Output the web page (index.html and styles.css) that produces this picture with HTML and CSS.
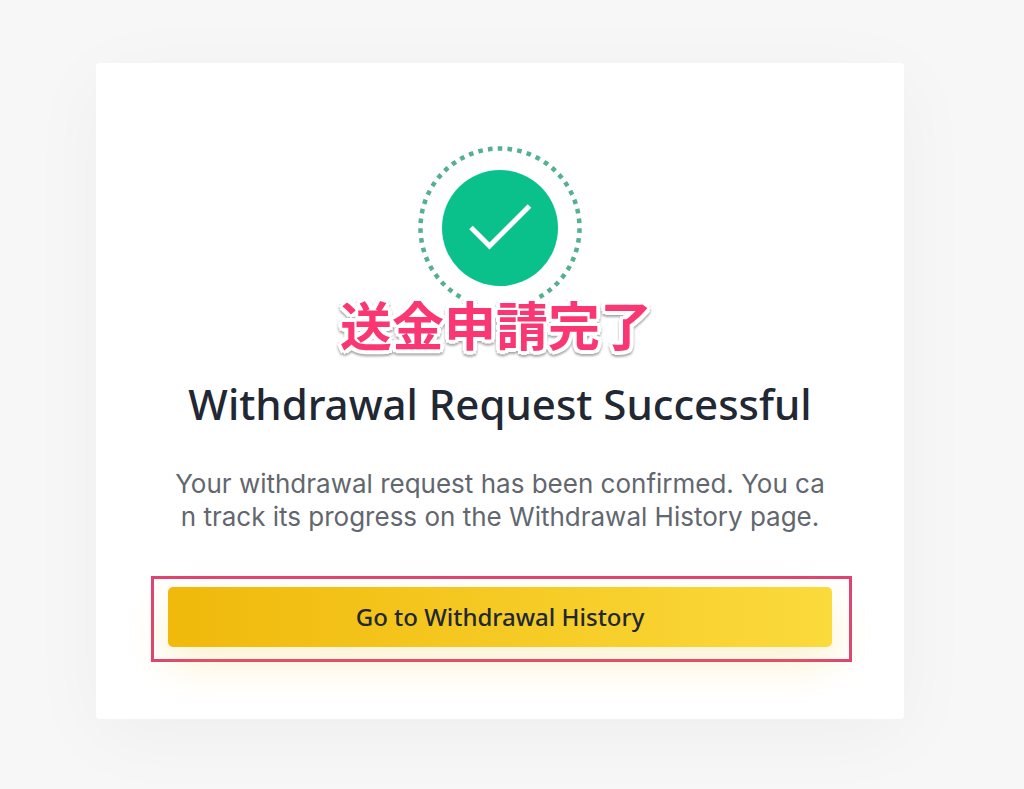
FILE: index.html
```html
<!doctype html>
<html lang="en">

<head>
    <meta charset="utf-8">
    <title>Withdrawal Request Successful</title>
    <meta name="viewport" content="width=device-width, initial-scale=1">
    <link rel="stylesheet" href="styles.css">
</head>

<body>
    <main class="card">
        <div class="status">
            <svg class="status-icon" viewBox="0 0 164 164" aria-hidden="true">
                <path class="ring" d="M82 2.500A79.500 79.500 0 0 1 121.500 151" />
                <path class="ring" d="M82 2.500A79.500 79.500 0 0 0 42.500 151" />
                <circle class="disc" cx="82" cy="82" r="58" />
                <path class="tick" d="M53 81.500L71.500 100L111.500 60" />
            </svg>
            <span class="note" lang="ja">送金申請完了</span>
        </div>
        <h1>Withdrawal Request Successful</h1>
        <p class="message">Your withdrawal request has been confirmed. You can track its progress on the Withdrawal History page.</p>
        <div class="highlight">
            <button class="btn" type="button">Go to Withdrawal History</button>
        </div>
    </main>
</body>

</html>
```
FILE: styles.css
```css
* {
    box-sizing: border-box;
}

body {
    margin: 0;
    padding: 63px 120px 70px 96px;
    background: #f7f7f7;
    font-family: "Noto Sans", "Noto Sans CJK JP", sans-serif;
    color: #212833;
}

.card {
    max-width: 808px;
    margin: 0 auto;
    padding: 83px 72px 57px;
    background: #fff;
    border-radius: 4px;
    box-shadow: 0 16px 80px rgba(0, 0, 0, 0.04);
    text-align: center;
}

.status {
    position: relative;
}

.status-icon {
    display: block;
    width: 164px;
    margin: 0 auto;
}

.ring {
    fill: none;
    stroke: #55b08d;
    stroke-width: 4.5;
    stroke-dasharray: 4.6 5.2;
    stroke-dashoffset: 2.3;
}

.disc {
    fill: #0ac18b;
}

.tick {
    fill: none;
    stroke: #fff;
    stroke-width: 5;
}

/* label that sits over the bottom of the ring */
.note {
    position: absolute;
    top: 142px;
    left: 0;
    right: 8px;
    font-family: "Noto Sans CJK JP", sans-serif;
    font-size: 52px;
    font-weight: 700;
    line-height: 72px;
    color: #fa3673;
    text-shadow: 4px 0 #fff, -4px 0 #fff, 0 4px #fff, 0 -4px #fff,
        3px 3px #fff, -3px 3px #fff, 3px -3px #fff, -3px -3px #fff;
    filter: drop-shadow(0 2px 1px rgba(0, 0, 0, 0.35));
}

h1 {
    margin: 64px 0 0;
    font-size: 42px;
    font-weight: 500;
    line-height: 60px;
}

.message {
    margin: 33px 0 0;
    font-family: Inter, sans-serif;
    font-size: 26px;
    font-weight: 400;
    line-height: 33px;
    color: #62676f;
    word-break: break-all;
}

.highlight {
    margin: 43px -20px 0 -17px;
    padding: 8px 17px 12px 14px;
    border: 3px solid #e04272;
}

.btn {
    display: block;
    width: 100%;
    height: 60px;
    border: 0;
    border-radius: 5px;
    background: linear-gradient(90deg, #f0b90b, #fbda3c);
    box-shadow: 0 16px 40px rgba(240, 185, 11, 0.2);
    font: 500 24px/30px "Noto Sans", sans-serif;
    color: #212833;
    cursor: pointer;
}
```
